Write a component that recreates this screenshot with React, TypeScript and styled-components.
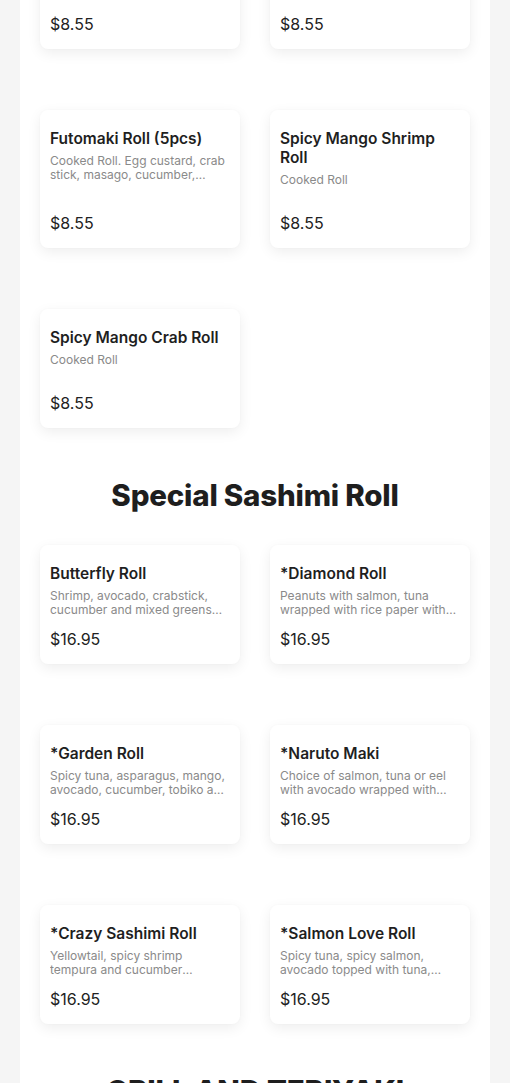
import React from "react";
import styled, { createGlobalStyle } from "styled-components";

const GlobalStyle = createGlobalStyle`
  * { box-sizing: border-box; }
  html, body {
    margin: 0;
    padding: 0;
    background: #f5f5f5;
    font-family: Inter, "Noto Sans", Arial, sans-serif;
    color: #222222;
  }
`;

type Item = { name: string; desc: string; price: string };
type Section = { title?: string; items: Item[] };

const sections: Section[] = [
  {
    items: [
      { name: "Spicy Crab Meat Shrimp Roll", desc: "Cooked Roll", price: "$8.55" },
      { name: "California Roll", desc: "Cooked Roll", price: "$8.55" },
      { name: "Futomaki Roll (5pcs)", desc: "Cooked Roll. Egg custard, crab stick, masago, cucumber, avocado, oshinko", price: "$8.55" },
      { name: "Spicy Mango Shrimp Roll", desc: "Cooked Roll", price: "$8.55" },
      { name: "Spicy Mango Crab Roll", desc: "Cooked Roll", price: "$8.55" },
    ],
  },
  {
    title: "Special Sashimi Roll",
    items: [
      { name: "Butterfly Roll", desc: "Shrimp, avocado, crabstick, cucumber and mixed greens wrapped with soy paper", price: "$16.95" },
      { name: "*Diamond Roll", desc: "Peanuts with salmon, tuna wrapped with rice paper with mango sauce", price: "$16.95" },
      { name: "*Garden Roll", desc: "Spicy tuna, asparagus, mango, avocado, cucumber, tobiko and mixed greens", price: "$16.95" },
      { name: "*Naruto Maki", desc: "Choice of salmon, tuna or eel with avocado wrapped with cucumber", price: "$16.95" },
      { name: "*Crazy Sashimi Roll", desc: "Yellowtail, spicy shrimp tempura and cucumber wrapped with soy paper", price: "$16.95" },
      { name: "*Salmon Love Roll", desc: "Spicy tuna, spicy salmon, avocado topped with tuna, salmon and tobiko", price: "$16.95" },
    ],
  },
  {
    title: "GRILL AND TERIYAKI",
    items: [
      { name: "Chicken Teriyaki", desc: "Served with rice and salad", price: "$15.95" },
      { name: "Beef Teriyaki", desc: "Served with rice and salad", price: "$17.95" },
    ],
  },
];

const Page = styled.main`
  width: 470px;
  margin: -89px 20px 0;
  background: #ffffff;
  padding: 0 20px 40px;
  min-height: 1200px;
`;

const MenuSection = styled.section`
  display: flex;
  flex-direction: column;
`;

const Heading = styled.h2`
  margin: 50px 0 33px;
  font-family: Inter, Arial, sans-serif;
  font-weight: 800;
  font-size: 29.5px;
  line-height: 34px;
  letter-spacing: -0.2px;
  text-align: center;
  color: #1e1e1e;
`;

const Grid = styled.div`
  display: grid;
  grid-template-columns: 200px 200px;
  column-gap: 30px;
  row-gap: 61px;
`;

const Card = styled.article`
  display: flex;
  flex-direction: column;
  background: #ffffff;
  border-radius: 8px;
  padding: 19px 10px 15px;
  box-shadow: 0 4px 14px rgba(0, 0, 0, 0.07), 0 0 3px rgba(0, 0, 0, 0.025);
`;

const Name = styled.h3`
  margin: 0;
  font-family: Inter, Arial, sans-serif;
  font-weight: 600;
  font-size: 15.5px;
  line-height: 19px;
  color: #1f1f1f;
`;

const Desc = styled.p`
  margin: 6px 0 12px;
  font-family: Inter, Arial, sans-serif;
  font-size: 12px;
  line-height: 14px;
  color: #8a8a8a;
  min-height: 28px;
  display: -webkit-box;
  -webkit-line-clamp: 2;
  -webkit-box-orient: vertical;
  overflow: hidden;
`;

const Price = styled.div`
  margin-top: auto;
  font-family: Inter, Arial, sans-serif;
  font-size: 16px;
  line-height: 20px;
  color: #222222;
`;

export default function App() {
  return (
    <>
      <GlobalStyle />
      <Page>
        {sections.map((s, i) => (
          <MenuSection key={i}>
            {s.title && <Heading>{s.title}</Heading>}
            <Grid>
              {s.items.map((it) => (
                <Card key={it.name}>
                  <Name>{it.name}</Name>
                  <Desc>{it.desc}</Desc>
                  <Price>{it.price}</Price>
                </Card>
              ))}
            </Grid>
          </MenuSection>
        ))}
      </Page>
    </>
  );
}
